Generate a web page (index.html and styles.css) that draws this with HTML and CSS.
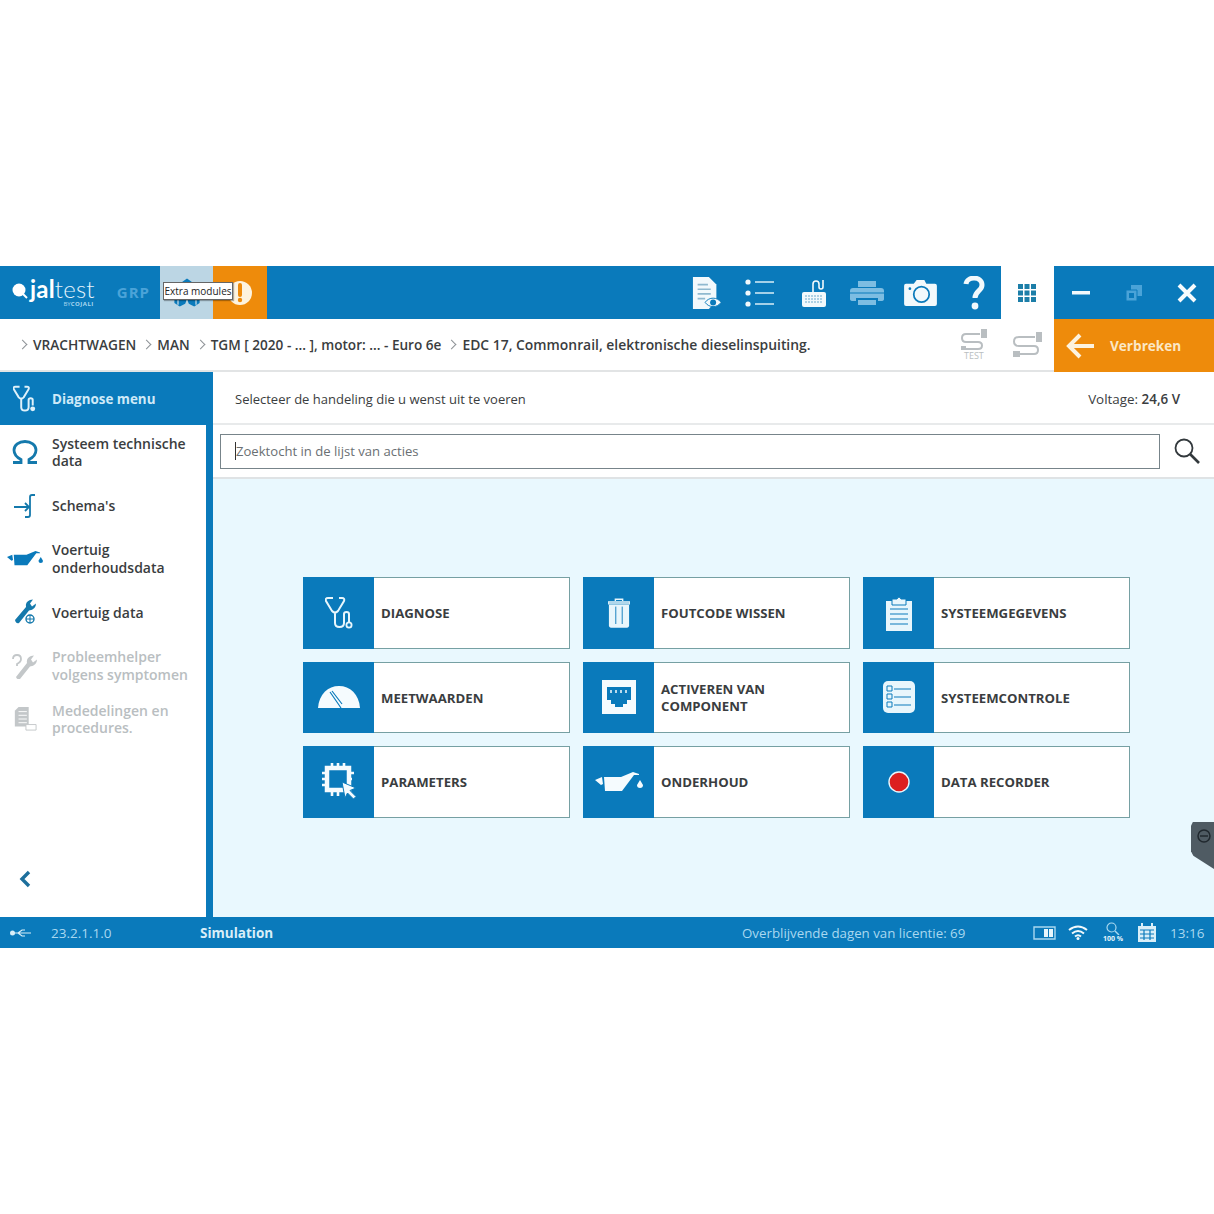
FILE: index.html
```html
<!DOCTYPE html>
<html lang="nl">
<head>
<meta charset="utf-8">
<title>Jaltest</title>
<link rel="stylesheet" href="styles.css">
</head>
<body>
<div class="app">
  <header class="topbar">
    <div class="brand">
      <div class="logo">
        <svg class="logo-dot" viewBox="0 0 18 18" width="18" height="18"><circle cx="8" cy="8" r="6.5" fill="#fff"/><path d="M12 12l4 4" stroke="#fff" stroke-width="2"/></svg>
        <div class="logo-text">
          <div class="logo-name"><b>jal</b>test</div>
          <div class="logo-by">BY<b>COJALI</b></div>
        </div>
      </div>
      <span class="grp">GRP</span>
    </div>
    <div class="cell modules">
      <svg viewBox="0 0 40 34" width="36" height="32"><path d="M20 1l7 5v7l7 3v12l-6 4-6-3-2-5-2 5-6 3-6-4V16l7-3V6z" fill="#0a7abb"/><path d="M20 18v14M10 20v10M30 20v10" stroke="#bcd6e4" stroke-width="1.5"/></svg>
    </div>
    <div class="cell alert">
      <svg viewBox="0 0 26 26" width="26" height="26"><circle cx="13" cy="13" r="12" fill="#fdf3df"/><path d="M13 5v10" stroke="#ee8b0b" stroke-width="4" stroke-linecap="round"/><circle cx="13" cy="20" r="2.2" fill="#ee8b0b"/></svg>
    </div>
    <div class="tooltip">Extra modules</div>
    <div class="spacer"></div>
    <div class="cell">
      <svg viewBox="0 0 32 36" width="30" height="36"><path d="M1 1h17l8 8v17l-8 9H1z" fill="#f2f9fc"/><path d="M6 9h11M6 14h14M6 19h14M6 24h8" stroke="#8fb9cf" stroke-width="1.800"/><path d="M14 28c4-6 13-6 17 0-4 6-13 6-17 0z" fill="#f2f9fc" stroke="#0a7abb"/><circle cx="22.500" cy="28" r="3.200" fill="#0a7abb"/></svg>
    </div>
    <div class="cell">
      <svg viewBox="0 0 30 28" width="30" height="28"><g fill="#f2f9fc"><circle cx="3" cy="3" r="2.6"/><circle cx="3" cy="14" r="2.6"/><circle cx="3" cy="25" r="2.6"/></g><path d="M10 3h19M10 14h19M10 25h19" stroke="#d8eef8" stroke-width="1.6"/></svg>
    </div>
    <div class="cell">
      <svg viewBox="0 0 28 30" width="28" height="30"><path d="M2 16q0-2 2-2h20q2 0 2 2v11q0 2-2 2H4q-2 0-2-2z" fill="#f2f9fc"/><path d="M5 18h18M5 21h18M5 24h18" stroke="#6aa9cc" stroke-width="1.2" stroke-dasharray="2 1"/><path d="M13 14V6q0-3 3-3t3 3v3q0 2 2 2t2-2V2" fill="none" stroke="#f2f9fc" stroke-width="1.6"/></svg>
    </div>
    <div class="cell">
      <svg viewBox="0 0 34 26" width="34" height="26"><path d="M8 1h18v6H8z" fill="#7dbde2"/><path d="M3 8h28q3 0 3 3v8q0 2-3 2h-3v-3H6v3H3q-3 0-3-2v-8q0-3 3-3z" fill="#7dbde2"/><path d="M8 20h18v5H8z" fill="#7dbde2"/><path d="M0 13h34" stroke="#0a7abb"/></svg>
    </div>
    <div class="cell">
      <svg viewBox="0 0 34 28" width="33" height="27"><path d="M2 5h8l3-4h8l2 4h9q2 0 2 2v19q0 2-2 2H2q-2 0-2-2V7q0-2 2-2z" fill="#f2f9fc"/><circle cx="18" cy="16" r="8" fill="none" stroke="#0a7abb" stroke-width="1.8"/><circle cx="6" cy="10" r="1.4" fill="#0a7abb"/></svg>
    </div>
    <div class="cell">
      <svg viewBox="0 0 22 34" width="22" height="34"><path d="M3 8c1-8 16-8 16 1 0 6-7 6-7 13" fill="none" stroke="#f2f9fc" stroke-width="5"/><circle cx="12" cy="30" r="3.4" fill="#f2f9fc"/></svg>
    </div>
    <div class="cell apps">
      <svg viewBox="0 0 18 18" width="18" height="18"><path fill="#1c7ea8" d="M0 0h5v5H0zM6.500 0h5v5h-5zM13 0h5v5h-5zM0 6.500h5v5H0zM6.500 6.500h5v5h-5zM13 6.500h5v5h-5zM0 13h5v5H0zM6.500 13h5v5h-5zM13 13h5v5h-5z"/></svg>
    </div>
    <div class="window">
      <div class="cell"><svg viewBox="0 0 18 4" width="18" height="4"><path d="M0 0h18v3.500H0z" fill="#f2f9fc"/></svg></div>
      <div class="cell"><svg viewBox="0 0 18 18" width="18" height="18"><path d="M6 1h11v11H6z" fill="#4aa3d8"/><path d="M1 6h11v11H1z" fill="#4aa3d8" stroke="#0a7abb"/><path d="M4 9h5v5H4z" fill="#0a7abb"/></svg></div>
      <div class="cell"><svg viewBox="0 0 20 20" width="20" height="20"><path d="M2 2l16 16M18 2L2 18" stroke="#f7fbfd" stroke-width="4"/></svg></div>
    </div>
  </header>

  <div class="crumbbar">
    <nav class="crumbs">
      <span class="sep"></span><span>VRACHTWAGEN</span>
      <span class="sep"></span><span>MAN</span>
      <span class="sep"></span><span class="crumb-model">TGM [ 2020 - ... ], motor: ... - Euro 6e</span>
      <span class="sep"></span><span class="crumb-ecu">EDC 17, Commonrail, elektronische dieselinspuiting.</span>
    </nav>
    <div class="cell plug">
      <div class="plug-stack">
        <svg viewBox="0 0 28 22" width="28" height="22"><path d="M20 5H6Q2 5 2 9t4 4h12q4 0 4 3.500T18 20H6" fill="none" stroke="#b9bec1" stroke-width="2"/><path d="M21 0h6v9h-6zM1 17h5v4H1z" fill="#b9bec1"/></svg>
        <span class="plug-label">TEST</span>
      </div>
    </div>
    <div class="cell plug">
      <svg viewBox="0 0 32 28" width="32" height="28"><path d="M24 6H8q-5 0-5 4.500T8 15h15q4 0 4 4t-4 4H9" fill="none" stroke="#b9bec1" stroke-width="2"/><path d="M25 1h6v10h-6zM2 20h7v6H2z" fill="#b9bec1"/></svg>
    </div>
    <div class="abort">
      <svg viewBox="0 0 30 26" width="30" height="26"><path d="M28 13H5M14 2L3 13l11 11" fill="none" stroke="#fdf3df" stroke-width="4"/></svg>
      <span>Verbreken</span>
    </div>
  </div>

  <div class="body">
    <aside class="sidebar">
      <div class="side-head">
        <svg viewBox="0 0 28 34" width="23" height="28"><path d="M8 2H3Q0 2 1 5l6 10q3 3 6 0l6-10q1-3-2-3h-3M10 17v10q0 4 4.500 4t4.500-4v-9q0-2 2.500-2t2.500 2v7" fill="none" stroke="#dff1fa" stroke-width="2.400"/><circle cx="24" cy="29" r="3" fill="#dff1fa"/></svg>
        <span>Diagnose menu</span>
      </div>
      <div class="side-list">
        <div class="side-item">
          <div class="side-icon"><svg viewBox="0 0 26 24" width="26" height="24"><path d="M1 22.500h8v-3C4 17 2 13 2 10 2 5 7 1.500 13 1.500S24 5 24 10c0 3-2 7-7 9.500v3h8" fill="none" stroke="#1479ac" stroke-width="2.800"/></svg></div>
          <span>Systeem technische data</span>
        </div>
        <div class="side-item">
          <div class="side-icon"><svg viewBox="0 0 24 26" width="24" height="26"><path d="M1 14h15M12 10l4 4-4 4M22 2h-3q-2 0-2 2v18q0 2-2 2h-3" fill="none" stroke="#1479ac" stroke-width="1.800"/></svg></div>
          <span>Schema's</span>
        </div>
        <div class="side-item">
          <div class="side-icon"><svg viewBox="0 0 48 22" width="36" height="17"><path d="M0 9l7-3 1 7-2 1zM9 6h17L38 1l6 2v1h-5L27 20H10z" fill="#0a7abb"/><path d="M45 9l3 5a3 3 0 1 1-6 0z" fill="#0a7abb"/></svg></div>
          <span>Voertuig onderhoudsdata</span>
        </div>
        <div class="side-item">
          <div class="side-icon"><svg viewBox="0 0 24 26" width="24" height="26"><path d="M2 21L13 8q-1-5 4-7l3-.500-3 4 2 3 4-3q0 6-7 7L6 24q-3 1-4-3z" fill="#1479ac"/><circle cx="17" cy="20" r="4" fill="none" stroke="#1479ac" stroke-width="1.400"/><path d="M13 20h8M17 16v8" stroke="#1479ac"/></svg></div>
          <span>Voertuig data</span>
        </div>
        <div class="side-item off">
          <div class="side-icon"><svg viewBox="0 0 26 26" width="26" height="26"><path d="M4 24L15 10q-1-5 4-7l3-.500-3 4 2 3 4-3q0 6-7 7L8 26q-3 1-4-2z" fill="#c3c7c9"/><path d="M1 6q0-4 4-4t4 4q0 3-4 5v2" fill="none" stroke="#c3c7c9" stroke-width="1.800"/></svg></div>
          <span>Probleemhelper volgens symptomen</span>
        </div>
        <div class="side-item off">
          <div class="side-icon"><svg viewBox="0 0 26 28" width="24" height="26"><path d="M6 1h11v21H2V5z" fill="#c3c7c9"/><path d="M6 6h9M6 10h9M6 14h9M6 18h9" stroke="#fff"/><path d="M14 20h11v6H14z" fill="#fff" stroke="#c3c7c9"/></svg></div>
          <span>Mededelingen en procedures.</span>
        </div>
      </div>
      <div class="side-foot">
        <svg viewBox="0 0 12 18" width="12" height="18"><path d="M10 2L3 9l7 7" fill="none" stroke="#1d6f9c" stroke-width="3.400"/></svg>
      </div>
    </aside>

    <main class="content">
      <div class="content-head">
        <span class="lead">Selecteer de handeling die u wenst uit te voeren</span>
        <span class="voltage">Voltage: <b>24,6 V</b></span>
      </div>
      <div class="search-row">
        <div class="search-box"><span class="caret">Zoektocht in de lijst van acties</span></div>
        <svg viewBox="0 0 28 28" width="28" height="28"><circle cx="11" cy="11" r="8.500" fill="none" stroke="#33393d" stroke-width="1.800"/><path d="M17 17l9 9" stroke="#33393d" stroke-width="2.600"/></svg>
      </div>
      <div class="stage">
        <div class="tiles">
          <div class="tile"><div class="tile-icon"><svg viewBox="0 0 28 34" width="28" height="34"><path d="M8 2H3Q0 2 1 5l6 10q3 3 6 0l6-10q1-3-2-3h-3M10 17v10q0 4 4.500 4t4.500-4v-9q0-2 2.500-2t2.500 2v8" fill="none" stroke="#e8f6fc" stroke-width="2"/><circle cx="24" cy="29" r="2.600" fill="none" stroke="#e8f6fc" stroke-width="1.800"/></svg></div><span>DIAGNOSE</span></div>
          <div class="tile"><div class="tile-icon"><svg viewBox="0 0 24 32" width="22" height="32"><path d="M8 3V1h8v2M0 4h24v2H0z" fill="none" stroke="#e8f6fc" stroke-width="1.500"/><path d="M1 7h22v23q0 2-2 2H3q-2 0-2-2z" fill="#e8f6fc"/><path d="M8.500 9v19M15.500 9v19" stroke="#0a7abb"/></svg></div><span>FOUTCODE WISSEN</span></div>
          <div class="tile"><div class="tile-icon"><svg viewBox="0 0 26 36" width="26" height="36"><path d="M0 6h26v30H0z" fill="#e8f6fc"/><path d="M6 4h5q2-4 4 0h5v6H6z" fill="#e8f6fc" stroke="#0a7abb"/><path d="M4 14h18M4 19h18M4 24h18M4 29h18" stroke="#0a7abb" stroke-width="1.200"/></svg></div><span>SYSTEEMGEGEVENS</span></div>
          <div class="tile"><div class="tile-icon"><svg viewBox="0 0 42 24" width="42" height="24"><path d="M0 23C1 9 10 1 21 1s20 8 21 22z" fill="#f5fbfe"/><path d="M12 7l9 13 2 3M14 6l10 13" fill="none" stroke="#0a7abb" stroke-width="1.200"/></svg></div><span>MEETWAARDEN</span></div>
          <div class="tile"><div class="tile-icon"><svg viewBox="0 0 34 34" width="34" height="34"><path d="M0 0h34v34H0z" fill="#f5fbfe"/><path d="M5 7h24v13h-4v4h-4v3h-8v-3H9v-4H5z" fill="#0a7abb"/><path d="M9 10v3M14 10v3M19 10v3M24 10v3" stroke="#f5fbfe" stroke-width="1.500"/></svg></div><span>ACTIVEREN VAN COMPONENT</span></div>
          <div class="tile"><div class="tile-icon"><svg viewBox="0 0 32 32" width="32" height="32"><rect width="32" height="32" rx="5" fill="#e8f6fc"/><path d="M4 5h5v5H4zM4 13h5v5H4zM4 21h5v5H4z" fill="none" stroke="#0a7abb"/><path d="M11 8h17M11 16h17M11 24h17" stroke="#0a7abb" stroke-width="1.200"/></svg></div><span>SYSTEEMCONTROLE</span></div>
          <div class="tile"><div class="tile-icon"><svg viewBox="0 0 34 37" width="34" height="37"><path d="M5 5h22v22H5z" fill="none" stroke="#f5fbfe" stroke-width="4.500"/><path d="M10 0v5M16 0v5M22 0v5M10 27v6M16 27v6M0 10h5M0 16h5M0 22h5M27 10h5M27 16h3" stroke="#f5fbfe" stroke-width="2.600"/><path d="M20 19l14 6-6 2.500 6 6-2.500 2.500-6-6L23 35z" fill="#f5fbfe" stroke="#0a7abb"/></svg></div><span>PARAMETERS</span></div>
          <div class="tile"><div class="tile-icon"><svg viewBox="0 0 48 22" width="48" height="22"><path d="M0 9l7-3 1 7-2 1zM9 6h17L38 1l6 2v1h-5L27 20H10z" fill="#f5fbfe"/><path d="M45 9l3 5a3 3 0 1 1-6 0z" fill="#f5fbfe"/></svg></div><span>ONDERHOUD</span></div>
          <div class="tile"><div class="tile-icon"><svg viewBox="0 0 22 22" width="22" height="22"><circle cx="11" cy="11" r="10" fill="#dc1f1f" stroke="#e8f6fc" stroke-width="1.400"/></svg></div><span>DATA RECORDER</span></div>
        </div>
        <div class="dock"><svg viewBox="0 0 14 14" width="14" height="14"><circle cx="7" cy="7" r="6" fill="none" stroke="#20282e" stroke-width="1.500"/><path d="M3 7h8" stroke="#20282e" stroke-width="1.500"/></svg></div>
      </div>
    </main>
  </div>

  <footer class="statusbar">
    <svg class="usb" viewBox="0 0 22 10" width="22" height="10"><circle cx="2.500" cy="5" r="2.500" fill="#d8eef8"/><path d="M3 5h18M8 5l4-3h3M8 5l4 3h3" fill="none" stroke="#d8eef8" stroke-width="1.200"/></svg>
    <span class="version">23.2.1.1.0</span>
    <span class="sim">Simulation</span>
    <span class="licence">Overblijvende dagen van licentie: 69</span>
    <svg class="st-bat" viewBox="0 0 24 14" width="24" height="14"><path d="M1 1h21v12H1z" fill="none" stroke="#a9d8f0" stroke-width="1.400"/><path d="M11 3h4v8h-4zM16 3h4v8h-4z" fill="#e8f6fc"/></svg>
    <svg class="st-wifi" viewBox="0 0 20 15" width="20" height="15"><path d="M1 5q9-7 18 0M4 8.500q6-5 12 0M7 11.500q3-2.500 6 0" fill="none" stroke="#f2f9fc" stroke-width="2"/><circle cx="10" cy="13.500" r="1.500" fill="#f2f9fc"/></svg>
    <div class="st-zoom">
      <svg viewBox="0 0 14 13" width="14" height="13"><circle cx="5.500" cy="5.500" r="4.500" fill="none" stroke="#a9d8f0" stroke-width="1.200"/><path d="M9 9l4 4" stroke="#a9d8f0" stroke-width="1.400"/></svg>
      <span>100 %</span>
    </div>
    <svg class="st-cal" viewBox="0 0 20 20" width="20" height="20"><path d="M1 3h18v16H1z" fill="#d8eef8"/><path d="M5 0v5M15 0v5" stroke="#d8eef8" stroke-width="2"/><path d="M3 7h14M3 11h14M3 15h14M7 7v10M13 7v10" stroke="#0a7abb" stroke-width="1.200"/></svg>
    <span class="clock">13:16</span>
  </footer>
</div>
</body>
</html>
```
FILE: styles.css
```css
* { box-sizing: border-box; }
html, body { margin: 0; height: 100%; background: #fff; }
body {
  display: flex;
  align-items: center;
  font-family: "Open Sans", "Noto Sans", sans-serif;
  font-size: 14px;
  color: #3a3d40;
}
.app { width: 1214px; height: 682px; display: flex; flex-direction: column; position: relative; }

.topbar { height: 53px; display: flex; background: #0a7abb; }
.cell { width: 53.4px; flex: none; display: flex; align-items: center; justify-content: center; }
.spacer { flex: 1; }
.brand { width: 160px; flex: none; display: flex; align-items: center; padding-left: 11px; }
.logo { display: flex; align-items: flex-start; }
.logo-dot { margin-top: 5px; margin-right: 1px; }
.logo-text { display: flex; flex-direction: column; }
.logo-name { font-family: "Lato", sans-serif; font-size: 24px; line-height: 24px; font-weight: 300; color: #e4f3fb; letter-spacing: .2px; }
.logo-name b { font-weight: 700; color: #fff; }
.logo-by { font-size: 6px; line-height: 7px; text-align: right; color: #a9d8f0; padding-right: 1px; }
.logo-by b { letter-spacing: .5px; }
.grp { margin: -2px 0 0 22px; font-size: 15px; font-weight: 700; letter-spacing: 1px; color: #4ba3d8; }
.modules { background: #bcd6e4; }
.alert { background: #ee8b0b; }
.tooltip {
  position: absolute; left: 163px; top: 16px; height: 18px; width: 70px;
  background: #fff; border: 1px solid #666; box-shadow: 1px 1px 1px rgba(0,0,0,.3);
  font-size: 10px; line-height: 16px; text-align: center; color: #222; white-space: nowrap;
}
.apps { background: #fff; }
.window { width: 160px; flex: none; display: flex; }

.crumbbar { height: 53px; display: flex; border-bottom: 2px solid #e2e4e5; }
.crumbs { flex: 1; display: flex; align-items: center; padding-left: 19px; font-size: 13.700px; font-weight: 600; color: #3a3d40; white-space: nowrap; }
.sep { width: 7px; height: 7px; margin: 0 7px 0 0; flex: none; border-top: 1px solid #8d9296; border-right: 1px solid #8d9296; transform: rotate(45deg); }
.crumbs span:not(.sep) { margin-right: 7px; }
.crumbs .crumb-model { font-size: 13.600px; }
.crumbs .crumb-ecu { font-size: 13.900px; }
.plug-stack { display: flex; flex-direction: column; align-items: center; }
.plug-label { font-size: 9px; line-height: 9px; color: #b9bec1; }
.abort {
  width: 160px; flex: none; margin-bottom: -2px; background: #ee8b0b; display: flex; align-items: center;
  gap: 14px; padding-left: 12px; font-size: 13.600px; font-weight: 700; color: #fbe7c6;
}

.body { flex: 1; display: flex; min-height: 0; }
.sidebar { width: 213px; flex: none; display: flex; flex-direction: column; border-right: 7px solid #0a7abb; background: #fff; }
.side-head {
  height: 53px; margin-right: -7px; background: #0a7abb; display: flex; align-items: center;
  padding-left: 13px; gap: 16px; font-size: 13.400px; font-weight: 700; color: #cfeaf8;
}
.side-list { display: flex; flex-direction: column; }
.side-item { height: 53.4px; display: flex; align-items: center; font-size: 14px; font-weight: 600; line-height: 17.500px; padding: 1px 14px 0 0; }
.side-icon { width: 52px; flex: none; padding-right: 3px; display: flex; justify-content: center; }
.off { color: #b9bec1; }
.side-foot { margin-top: auto; height: 47px; display: flex; align-items: flex-start; padding: 0 0 0 19px; }

.content { flex: 1; display: flex; flex-direction: column; min-width: 0; }
.content-head { height: 53px; display: flex; align-items: center; justify-content: space-between; padding: 2px 34px 0 22px; border-bottom: 2px solid #e8eaeb; }
.lead { font-size: 13px; }
.voltage { font-size: 13.400px; }
.content-head b { font-weight: 600; }
.search-row { height: 54px; display: flex; align-items: center; padding: 0 13px 0 7px; gap: 13px; border-bottom: 2px solid #dfe3e5; }
.search-box { flex: 1; height: 35px; border: 1px solid #77848a; background: #fff; display: flex; align-items: center; padding-left: 14px; font-size: 13.100px; color: #6a6f73; }
.caret { border-left: 1px solid #333; }
.stage { flex: 1; position: relative; background: #e9f8fe; padding: 98px 0 0 90px; }
.tiles { display: grid; grid-template-columns: repeat(3, 267px); grid-auto-rows: 71.500px; gap: 13px; }
.tile { display: flex; align-items: center; background: #fff; border: 1px solid #76a0a3; font-size: 13.200px; font-weight: 700; line-height: 17.500px; color: #3a3d40; padding: 2px 30px 0 0; }
.tile-icon { width: 71px; margin: -3px 7px -1px -1px; align-self: stretch; flex: none; background: #0a7abb; display: flex; align-items: center; justify-content: center; }
.dock {
  position: absolute; right: 0; top: 343px; width: 23px; height: 47px;
  background: #4f5b63; clip-path: polygon(8% 0, 100% 0, 100% 100%, 10% 72%, 0 62%, 0 8%);
  display: flex; align-items: flex-start; padding: 7px 0 0 6px;
}

.statusbar { height: 31px; position: relative; display: flex; align-items: center; background: #0a7abb; color: #a9d8f0; font-size: 13.500px; }
.usb { margin-left: 10px; flex: none; }
.version { margin-left: 19px; width: 149px; flex: none; }
.sim { width: 542px; flex: none; font-weight: 700; color: #d8eef8; }
.licence { width: 291px; flex: none; font-size: 13.300px; }
.st-wifi { margin-left: 11px; }
.st-zoom { width: 24px; margin-left: 13px; display: flex; flex-direction: column; align-items: center; }
.st-zoom span { font-size: 7px; line-height: 8px; font-weight: 700; color: #e8f6fc; white-space: nowrap; }
.st-cal { margin-left: 12px; }
.clock { margin-left: 13px; }
```
